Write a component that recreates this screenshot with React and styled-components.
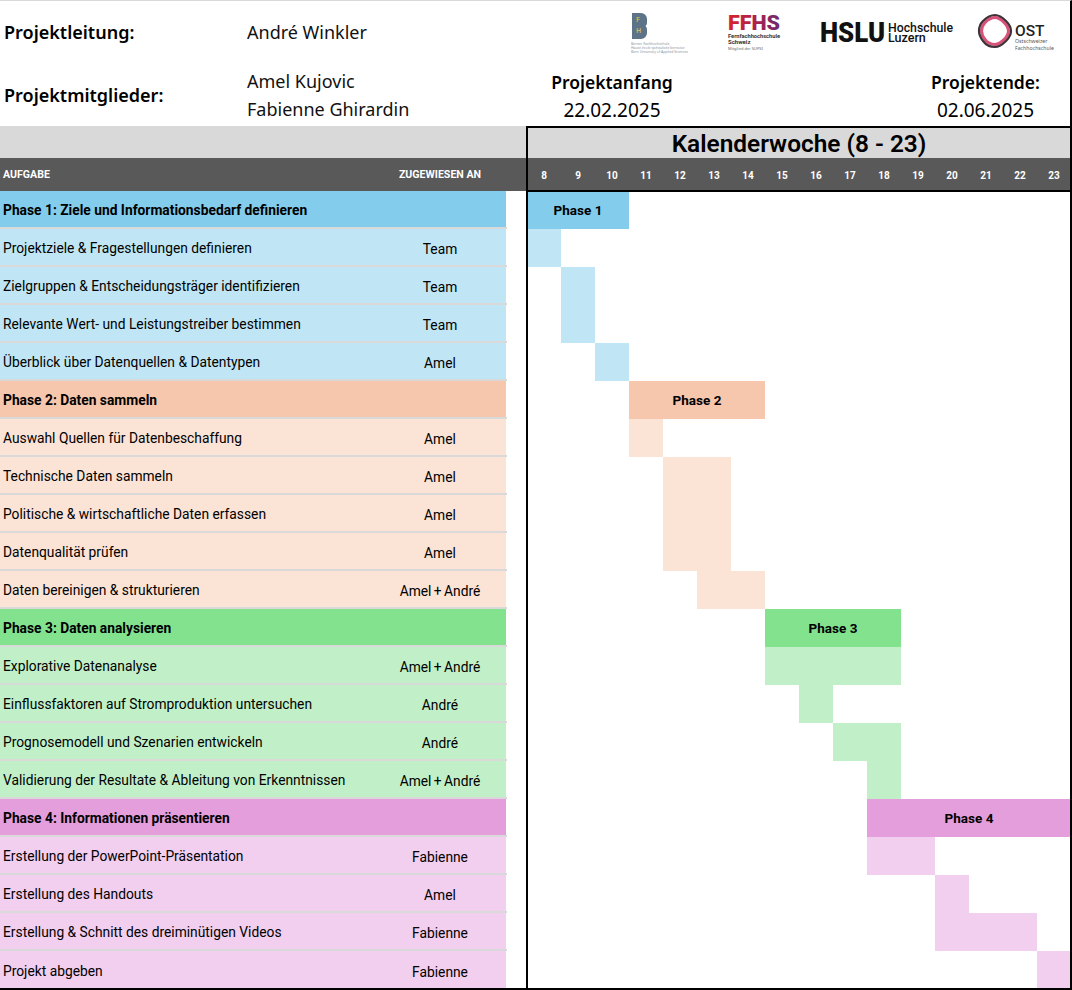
import styled, { createGlobalStyle } from "styled-components";

const GlobalStyle = createGlobalStyle`
  body {
    margin: 0;
    background: #fff;
    font-family: "Noto Sans", "Liberation Sans", sans-serif;
    color: #000;
  }
`;

const WEEKS = [8, 9, 10, 11, 12, 13, 14, 15, 16, 17, 18, 19, 20, 21, 22, 23];

const COLORS = {
  1: { main: "#83cceb", light: "#c0e6f5" },
  2: { main: "#f6c6ad", light: "#fbe3d6" },
  3: { main: "#83e28e", light: "#c1f0c8" },
  4: { main: "#e59edc", light: "#f2ceef" },
};

// from / to are calendar weeks
const ROWS = [
  { phase: 1, header: true, task: "Phase 1: Ziele und Informationsbedarf definieren", label: "Phase 1", from: 8, to: 10 },
  { phase: 1, task: "Projektziele & Fragestellungen definieren", who: "Team", from: 8, to: 8 },
  { phase: 1, task: "Zielgruppen & Entscheidungsträger identifizieren", who: "Team", from: 9, to: 9 },
  { phase: 1, task: "Relevante Wert- und Leistungstreiber bestimmen", who: "Team", from: 9, to: 9 },
  { phase: 1, task: "Überblick über Datenquellen & Datentypen", who: "Amel", from: 10, to: 10 },
  { phase: 2, header: true, task: "Phase 2: Daten sammeln", label: "Phase 2", from: 11, to: 14 },
  { phase: 2, task: "Auswahl Quellen für Datenbeschaffung", who: "Amel", from: 11, to: 11 },
  { phase: 2, task: "Technische Daten sammeln", who: "Amel", from: 12, to: 13 },
  { phase: 2, task: "Politische & wirtschaftliche Daten erfassen", who: "Amel", from: 12, to: 13 },
  { phase: 2, task: "Datenqualität prüfen", who: "Amel", from: 12, to: 13 },
  { phase: 2, task: "Daten bereinigen & strukturieren", who: "Amel + André", from: 13, to: 14 },
  { phase: 3, header: true, task: "Phase 3: Daten analysieren", label: "Phase 3", from: 15, to: 18 },
  { phase: 3, task: "Explorative Datenanalyse", who: "Amel + André", from: 15, to: 18 },
  { phase: 3, task: "Einflussfaktoren auf Stromproduktion untersuchen", who: "André", from: 16, to: 16 },
  { phase: 3, task: "Prognosemodell und Szenarien entwickeln", who: "André", from: 17, to: 18 },
  { phase: 3, task: "Validierung der Resultate & Ableitung von Erkenntnissen", who: "Amel + André", from: 18, to: 18 },
  { phase: 4, header: true, task: "Phase 4: Informationen präsentieren", label: "Phase 4", from: 18, to: 23 },
  { phase: 4, task: "Erstellung der PowerPoint-Präsentation", who: "Fabienne", from: 18, to: 19 },
  { phase: 4, task: "Erstellung des Handouts", who: "Amel", from: 20, to: 20 },
  { phase: 4, task: "Erstellung & Schnitt des dreiminütigen Videos", who: "Fabienne", from: 20, to: 22 },
  { phase: 4, task: "Projekt abgeben", who: "Fabienne", from: 23, to: 23 },
];

const Sheet = styled.div`
  width: 1072px;
  height: 990px;
  overflow: hidden;
`;

const Info = styled.header`
  display: grid;
  grid-template-columns: 247px 280px 170px 204px 169px;
  grid-template-rows: 62px 63px;
  height: 126px;
  border-top: 1px solid #d9d9d9;
  border-right: 2px solid #000;
  box-sizing: border-box;
`;

const Label = styled.div`
  padding: ${(p) => (p.$low ? 1 : 0)}px 0 0 4px;
  display: flex;
  align-items: center;
  font-size: 18px;
  font-weight: 600;
`;

const Names = styled.div`
  display: flex;
  flex-direction: column;
  justify-content: center;
  padding-top: ${(p) => (p.$low ? 1 : 0)}px;
  font-size: 18px;
  line-height: 28px;
  color: #111;
`;

const Logos = styled.div`
  grid-column: 3 / -1;
  display: grid;
  grid-template-columns: 97px 92px 157px 76px;
  align-items: center;
  padding-left: 104px;
  svg {
    display: block;
  }
`;

const DateBlock = styled.div`
  display: flex;
  flex-direction: column;
  align-items: center;
  justify-content: center;
  padding-top: 2px;
  line-height: 28px;
  font-size: 19px;
  strong {
    font-size: 17.5px;
    font-weight: 600;
  }
`;

const Spacer = styled.div``;

const Board = styled.div`
  display: grid;
  grid-template-columns: 526px 546px;
  height: 864px;
  box-sizing: border-box;
  border-bottom: 2px solid #000;
  overflow: hidden;
`;

const TaskSide = styled.section`
  display: flex;
  flex-direction: column;
`;

const Band = styled.div`
  flex: none;
  height: 32px;
  background: #d9d9d9;
`;

const HeadRow = styled.div`
  flex: none;
  height: 33px;
  background: #595959;
  color: #fff;
  display: grid;
  grid-template-columns: 370px 134px;
  align-items: center;
  font-family: "Roboto", sans-serif;
  font-size: 10.6px;
  font-weight: 700;
  padding-left: 3px;
  box-sizing: border-box;
  span:last-child {
    text-align: center;
  }
`;

const TaskRow = styled.div`
  flex: none;
  width: 507px;
  height: 38px;
  box-sizing: border-box;
  display: grid;
  grid-template-columns: 373px 134px;
  align-items: center;
  padding-top: 2px;
  background: linear-gradient(${(p) => p.$fill}, ${(p) => p.$fill}) no-repeat 0 0 / 506px 100%;
  border-bottom: 2px solid #d9d9d9;
  font-family: "Roboto", sans-serif;
  font-size: 13.8px;
  font-weight: ${(p) => (p.$header ? 700 : 400)};
  &:last-child {
    border-bottom: 0;
  }
`;

const TaskName = styled.span`
  padding-left: 3px;
  white-space: nowrap;
`;

const Assignee = styled.span`
  padding-top: 1px;
  text-align: center;
  word-spacing: -1px;
`;

const Calendar = styled.section`
  position: relative;
  display: flex;
  flex-direction: column;
`;

const Frame = styled.div`
  position: absolute;
  z-index: 2;
  inset: 0;
  border: 2px solid #000;
  border-bottom: 0;
  pointer-events: none;
`;

const CalendarTitle = styled.div`
  flex: none;
  height: 32px;
  box-sizing: border-box;
  padding-top: 3px;
  background: #d9d9d9;
  display: flex;
  align-items: center;
  justify-content: center;
  font-family: "Roboto", sans-serif;
  font-size: 24.4px;
  font-weight: 600;
`;

const Weeks = styled.div`
  flex: none;
  height: 33px;
  box-sizing: border-box;
  padding: 1px 0 0 1px;
  background: #595959;
  display: grid;
  grid-template-columns: repeat(16, 34px);
  align-items: center;
  position: relative;
  z-index: 1;
  box-shadow: inset 0 -1px 0 #000, 0 1px 0 #000;
`;

const Week = styled.span`
  text-align: center;
  color: #fff;
  font-family: "Roboto", sans-serif;
  font-size: 10px;
  font-weight: 700;
`;

const Timeline = styled.div`
  display: grid;
  padding-left: 1px;
  grid-template-columns: repeat(16, 34px);
  grid-auto-rows: 38px;
`;

const Bar = styled.div`
  grid-column: ${(p) => p.$from - 7} / ${(p) => p.$to - 6};
  grid-row: ${(p) => p.$row};
  background: ${(p) => p.$color};
  display: flex;
  align-items: center;
  justify-content: center;
  font-family: "Roboto", sans-serif;
  font-size: 13.5px;
  font-weight: 700;
`;

function BfhLogo() {
  return (
    <svg width="60" height="44" viewBox="0 0 60 44">
      <path d="M1 3h9a6 6 0 0 1 6 6v4a4 4 0 0 1-1.500 3 5 5 0 0 1 1.500 3.500V23a6 6 0 0 1-6 6H1z" fill="#5d7388" />
      <text x="5" y="12" fontSize="7" fontWeight="600" fill="#d2b95c">F</text>
      <text x="5" y="23" fontSize="7" fontWeight="600" fill="#d2b95c">H</text>
      <text x="0" y="34.500" fontSize="3.500" fill="#8b949c">Berner Fachhochschule</text>
      <text x="0" y="39" fontSize="3.500" fill="#8b949c">Haute école spécialisée bernoise</text>
      <text x="0" y="43" fontSize="3.500" fill="#8b949c" textLength="57" lengthAdjust="spacingAndGlyphs">Bern University of Applied Sciences</text>
    </svg>
  );
}

function FfhsLogo() {
  return (
    <svg width="54" height="44" viewBox="0 0 54 44">
      <defs>
        <linearGradient id="ffhs" x1="0" x2="1" y1="0" y2="0">
          <stop offset="0" stopColor="#d8232a" />
          <stop offset="0.5" stopColor="#b0214a" />
          <stop offset="1" stopColor="#6d2a73" />
        </linearGradient>
      </defs>
      <text x="0" y="20" fontSize="21" fontWeight="900" fontFamily="Roboto" fill="url(#ffhs)" textLength="52" lengthAdjust="spacingAndGlyphs">FFHS</text>
      <text x="0" y="28" fontSize="6" fontWeight="700" fontFamily="Roboto" fill="#333" textLength="52" lengthAdjust="spacingAndGlyphs">Fernfachhochschule</text>
      <text x="0" y="33.500" fontSize="6" fontWeight="700" fontFamily="Roboto" fill="#333">Schweiz</text>
      <text x="0" y="39.500" fontSize="4" fill="#666">Mitglied der SUPSI</text>
    </svg>
  );
}

function HsluLogo() {
  return (
    <svg width="135" height="34" viewBox="0 0 135 34">
      <text x="0" y="27" fontSize="28" fontWeight="900" fontFamily="Roboto" fill="#111" textLength="65" lengthAdjust="spacingAndGlyphs">HSLU</text>
      <text x="68" y="17" fontSize="12.500" fontFamily="Roboto" fontWeight="500" fill="#111" textLength="65" lengthAdjust="spacingAndGlyphs">Hochschule</text>
      <text x="68" y="27" fontSize="12.500" fontFamily="Roboto" fontWeight="500" fill="#111">Luzern</text>
    </svg>
  );
}

function OstLogo() {
  const ring = "M18 3c5 0 8 3 11 6s5 6 5 10-2 7-5 10-6 6-11 6-9-2-12-6-4-6-4-10 1-7 4-10 7-6 12-6z";
  return (
    <svg width="78" height="40" viewBox="0 0 78 40">
      <path d={ring} fill="none" stroke="#d9527a" strokeWidth="3.600" transform="translate(18 19) scale(0.84) translate(-18 -19)" />
      <path d={ring} fill="none" stroke="#3f3238" strokeWidth="2.200" />
      <text x="38" y="24" fontSize="15.500" fontWeight="500" fontFamily="Roboto" fill="#222">OST</text>
      <text x="38" y="31" fontSize="5.200" fill="#555">Ostschweizer</text>
      <text x="38" y="38" fontSize="5.200" fill="#555">Fachhochschule</text>
    </svg>
  );
}

export default function App() {
  return (
    <Sheet>
      <GlobalStyle />
      <Info>
        <Label>Projektleitung:</Label>
        <Names>André Winkler</Names>
        <Logos>
          <BfhLogo />
          <FfhsLogo />
          <HsluLogo />
          <OstLogo />
        </Logos>
        <Label $low>Projektmitglieder:</Label>
        <Names $low>
          <span>Amel Kujovic</span>
          <span>Fabienne Ghirardin</span>
        </Names>
        <DateBlock>
          <strong>Projektanfang</strong>
          <span>22.02.2025</span>
        </DateBlock>
        <Spacer />
        <DateBlock>
          <strong>Projektende:</strong>
          <span>02.06.2025</span>
        </DateBlock>
      </Info>
      <Board>
        <TaskSide>
          <Band />
          <HeadRow>
            <span>AUFGABE</span>
            <span>ZUGEWIESEN AN</span>
          </HeadRow>
          {ROWS.map((row) => (
            <TaskRow
              key={row.task}
              $header={row.header}
              $fill={row.header ? COLORS[row.phase].main : COLORS[row.phase].light}
            >
              <TaskName>{row.task}</TaskName>
              <Assignee>{row.who}</Assignee>
            </TaskRow>
          ))}
        </TaskSide>
        <Calendar>
          <CalendarTitle>Kalenderwoche (8 - 23)</CalendarTitle>
          <Weeks>
            {WEEKS.map((w) => (
              <Week key={w}>{w}</Week>
            ))}
          </Weeks>
          <Timeline>
            {ROWS.map((row, i) => (
              <Bar
                key={row.task}
                $row={i + 1}
                $from={row.from}
                $to={row.to}
                $color={row.header ? COLORS[row.phase].main : COLORS[row.phase].light}
              >
                {row.label}
              </Bar>
            ))}
          </Timeline>
          <Frame />
        </Calendar>
      </Board>
    </Sheet>
  );
}
